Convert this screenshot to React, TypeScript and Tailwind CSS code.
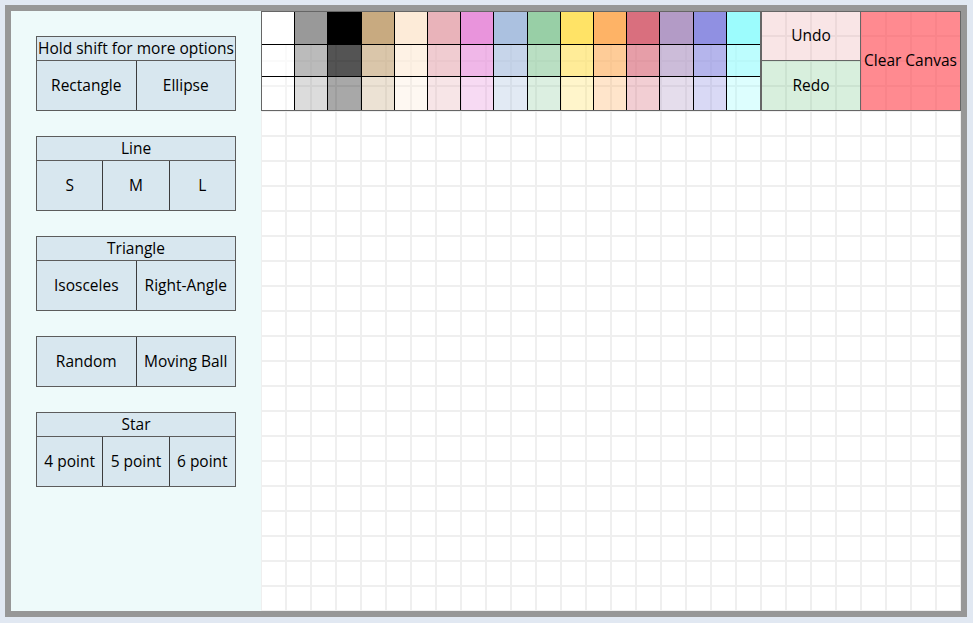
import React from 'react';

// Base palette colours; rows 2 and 3 are the same hues, faded
const swatches = [
  '255,255,255',
  '153,153,153',
  '0,0,0',
  '200,170,128',
  '253,235,216',
  '233,179,186',
  '233,148,220',
  '171,193,224',
  '152,207,166',
  '255,227,102',
  '254,179,102',
  '217,111,126',
  '179,155,198',
  '144,144,226',
  '156,252,253',
];

const alphas = [1, 0.67, 0.34];

type Group = { title?: string; options: string[] };

const groups: Group[] = [
  { title: 'Hold shift for more options', options: ['Rectangle', 'Ellipse'] },
  { title: 'Line', options: ['S', 'M', 'L'] },
  { title: 'Triangle', options: ['Isosceles', 'Right-Angle'] },
  { options: ['Random', 'Moving Ball'] },
  { title: 'Star', options: ['4 point', '5 point', '6 point'] },
];

function ToolGroup({ title, options }: Group) {
  return (
    <div className="w-[200px] border border-[#5c5c5c] bg-[#d8e7ef]">
      {title && (
        <div className="flex h-[24px] items-center justify-center border-b border-[#5c5c5c]">
          {title}
        </div>
      )}
      <div className="flex h-[49px]">
        {options.map((opt, i) => (
          <button
            key={opt}
            className={
              'flex flex-1 items-center justify-center ' +
              (i < options.length - 1 ? 'border-r border-[#3c3c3c]' : '')
            }
          >
            {opt}
          </button>
        ))}
      </div>
    </div>
  );
}

function Palette() {
  return (
    <div className="grid h-[100px] w-[500px] grid-cols-[repeat(15,1fr)] grid-rows-3 border border-[#666]">
      {alphas.map((a, r) =>
        swatches.map((c, i) => (
          <div
            key={`${r}-${i}`}
            className={
              (i < swatches.length - 1 ? 'border-r ' : '') +
              (r < 2 ? 'border-b ' : '') +
              'border-black'
            }
            style={{ backgroundColor: `rgba(${c},${a})` }}
          />
        ))
      )}
    </div>
  );
}

export default function App() {
  return (
    <div className="min-h-screen bg-[#e1e8f2] p-[5px] font-['Open_Sans',sans-serif] text-[15.5px] leading-tight text-black">
      <div className="flex w-[962px] border-[6px] border-[#979797]">
        {/* Tools */}
        <aside className="flex h-[600px] w-[250px] flex-col gap-[25px] bg-[#eefafa] p-[25px]">
          {groups.map((g, i) => (
            <ToolGroup key={i} {...g} />
          ))}
        </aside>

        {/* Canvas */}
        <main className="h-[600px] w-[700px] bg-white bg-[linear-gradient(to_right,#efefef_2px,transparent_2px),linear-gradient(to_bottom,#efefef_2px,transparent_2px)] bg-size-[25px_25px] bg-position-[24px_24px]">
          <div className="flex">
            <Palette />
            <div className="flex w-[100px] flex-col">
              <button className="h-[50px] border border-[#666] bg-[rgba(230,150,155,0.25)]">Undo</button>
              <button className="h-[50px] border border-t-0 border-[#666] bg-[rgba(100,190,120,0.25)]">Redo</button>
            </div>
            <button className="h-[100px] w-[100px] border border-l-0 border-[#666] bg-[rgba(255,60,70,0.6)]">
              Clear Canvas
            </button>
          </div>
        </main>
      </div>
    </div>
  );
}
